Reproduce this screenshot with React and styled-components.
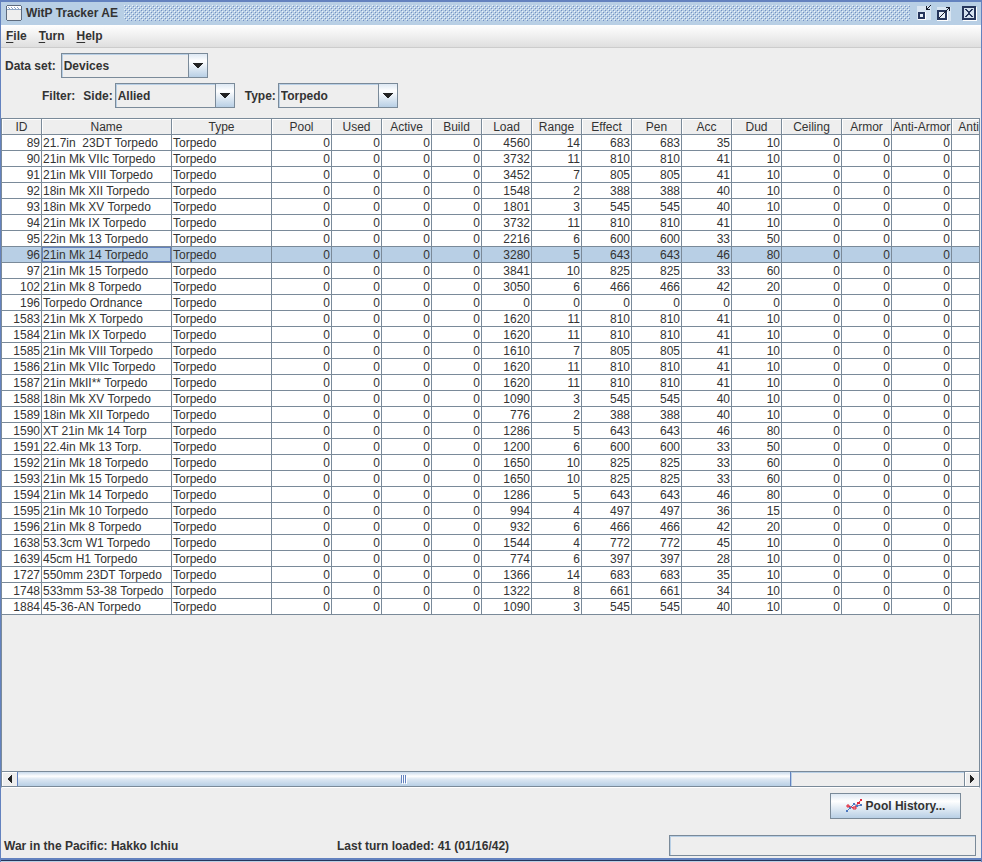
import { useState } from "react";
import styled, { createGlobalStyle } from "styled-components";

const columns = [
    { name: "ID", width: 40 },
    { name: "Name", width: 130 },
    { name: "Type", width: 100 },
    { name: "Pool", width: 60 },
    { name: "Used", width: 50 },
    { name: "Active", width: 50 },
    { name: "Build", width: 50 },
    { name: "Load", width: 50 },
    { name: "Range", width: 50 },
    { name: "Effect", width: 50 },
    { name: "Pen", width: 50 },
    { name: "Acc", width: 50 },
    { name: "Dud", width: 50 },
    { name: "Ceiling", width: 60 },
    { name: "Armor", width: 50 },
    { name: "Anti-Armor", width: 60 },
    { name: "Anti" },
];

// id, name, load, range, effect, pen, acc, dud
const devices = [
    [89, "21.7in  23DT Torpedo", 4560, 14, 683, 683, 35, 10],
    [90, "21in Mk VIIc Torpedo", 3732, 11, 810, 810, 41, 10],
    [91, "21in Mk VIII Torpedo", 3452, 7, 805, 805, 41, 10],
    [92, "18in Mk XII Torpedo", 1548, 2, 388, 388, 40, 10],
    [93, "18in Mk XV Torpedo", 1801, 3, 545, 545, 40, 10],
    [94, "21in Mk IX Torpedo", 3732, 11, 810, 810, 41, 10],
    [95, "22in Mk 13 Torpedo", 2216, 6, 600, 600, 33, 50],
    [96, "21in Mk 14 Torpedo", 3280, 5, 643, 643, 46, 80],
    [97, "21in Mk 15 Torpedo", 3841, 10, 825, 825, 33, 60],
    [102, "21in Mk 8 Torpedo", 3050, 6, 466, 466, 42, 20],
    [196, "Torpedo Ordnance", 0, 0, 0, 0, 0, 0],
    [1583, "21in Mk X Torpedo", 1620, 11, 810, 810, 41, 10],
    [1584, "21in Mk IX Torpedo", 1620, 11, 810, 810, 41, 10],
    [1585, "21in Mk VIII Torpedo", 1610, 7, 805, 805, 41, 10],
    [1586, "21in Mk VIIc Torpedo", 1620, 11, 810, 810, 41, 10],
    [1587, "21in MkII** Torpedo", 1620, 11, 810, 810, 41, 10],
    [1588, "18in Mk XV Torpedo", 1090, 3, 545, 545, 40, 10],
    [1589, "18in Mk XII Torpedo", 776, 2, 388, 388, 40, 10],
    [1590, "XT 21in Mk 14 Torp", 1286, 5, 643, 643, 46, 80],
    [1591, "22.4in Mk 13 Torp.", 1200, 6, 600, 600, 33, 50],
    [1592, "21in Mk 18 Torpedo", 1650, 10, 825, 825, 33, 60],
    [1593, "21in Mk 15 Torpedo", 1650, 10, 825, 825, 33, 60],
    [1594, "21in Mk 14 Torpedo", 1286, 5, 643, 643, 46, 80],
    [1595, "21in Mk 10 Torpedo", 994, 4, 497, 497, 36, 15],
    [1596, "21in Mk 8 Torpedo", 932, 6, 466, 466, 42, 20],
    [1638, "53.3cm W1 Torpedo", 1544, 4, 772, 772, 45, 10],
    [1639, "45cm H1 Torpedo", 774, 6, 397, 397, 28, 10],
    [1727, "550mm 23DT Torpedo", 1366, 14, 683, 683, 35, 10],
    [1748, "533mm 53-38 Torpedo", 1322, 8, 661, 661, 34, 10],
    [1884, "45-36-AN Torpedo", 1090, 3, 545, 545, 40, 10],
];

function Combo({ id, width, options }) {
    return (
        <ComboBox $width={width}>
            <select id={id}>
                {options.map((option) => <option key={option}>{option}</option>)}
            </select>
            <ComboArrow>
                <svg width="10" height="5" viewBox="0 0 10 5" shapeRendering="crispEdges">
                    <path d="M0 0h10v1h-1v1h-1v1h-1v1h-1v1h-2v-1h-1v-1h-1v-1h-1v-1h-1z" fill="#222" />
                </svg>
            </ComboArrow>
        </ComboBox>
    );
}

export default function App() {
    const [selected, setSelected] = useState(96);

    return (
        <Window>
            <GlobalStyle />
            <TitleBar>
                <svg width="16" height="16" viewBox="0 0 16 16" shapeRendering="crispEdges">
                    <path d="M1 0h14v1h1v14h-1v1h-14v-1h-1v-14h1z" fill="#5e6b7d" />
                    <path d="M1 1h14v14h-14z" fill="#fff" />
                    <path d="M1 5h14v10h-14z" fill="#eee" />
                    <path d="M2 2h1v1h-1zM5 2h1v1h-1zM8 2h1v1h-1zM11 2h1v1h-1zM3 3h1v1h-1zM6 3h1v1h-1zM9 3h1v1h-1zM12 3h1v1h-1zM1 4h14v1h-14z" fill="#8ba5c5" />
                </svg>
                <h1>WitP Tracker AE</h1>
                <Bumps>
                    <svg width="100%" height="16" shapeRendering="crispEdges">
                        <defs>
                            <pattern id="bumps" width="4" height="4" patternUnits="userSpaceOnUse">
                                <path d="M0 0h1v1h-1zM2 2h1v1h-1z" fill="#edf4fb" />
                                <path d="M1 1h1v1h-1zM3 3h1v1h-1z" fill="#7491c4" />
                            </pattern>
                        </defs>
                        <rect width="100%" height="16" fill="url(#bumps)" />
                    </svg>
                </Bumps>
                <WindowButtons>
                    <button aria-label="Minimize">
                        <svg width="16" height="16" viewBox="0 0 16 16" shapeRendering="crispEdges">
                            <path d="M2 1h14v14h-14z" fill="#d8e5f2" />
                            <path d="M4 8h5v5h-5z" fill="#e6eff8" stroke="#26365c" strokeWidth="2" />
                            <path d="M3 14h8v1h-8zM10 7h1v8h-1z" fill="#fff" />
                            <path d="M11 1h1v3h3v1h-4zM12 3h1v-1h1v-1h1v-1h1v1h-1v1h-1v1h-1v1h-1z" fill="#151b2b" />
                        </svg>
                    </button>
                    <button aria-label="Maximize">
                        <svg width="16" height="16" viewBox="0 0 16 16" shapeRendering="crispEdges">
                            <path d="M2 2h14v14h-14z" fill="#d8e5f2" />
                            <path d="M3 6h8v8h-8z" fill="#e6eff8" stroke="#26365c" strokeWidth="2" />
                            <path d="M2 15h11v1h-11zM12 7h1v9h-1z" fill="#fff" />
                            <path d="M4 12h1v1h-1zM5 11h1v1h-1zM6 10h1v1h-1zM7 9h1v1h-1zM8 8h1v1h-1zM9 7h1v1h-1zM10 6h1v1h-1zM11 5h1v1h-1zM12 4h1v1h-1zM13 3h1v1h-1zM11 2h4v4h-1v-3h-3z" fill="#151b2b" />
                        </svg>
                    </button>
                    <button aria-label="Close">
                        <svg width="16" height="16" viewBox="0 0 16 16" shapeRendering="crispEdges">
                            <path d="M2 2h14v14h-14z" fill="#fff" />
                            <path d="M2 2h12v12h-12z" fill="#d4e1ef" stroke="#26365c" strokeWidth="2" />
                            <path d="M4 4h2v1h1v1h2v-1h1v-1h2v1h-1v1h-1v1h-1v2h1v1h1v1h1v1h-2v-1h-1v-1h-2v1h-1v1h-2v-1h1v-1h1v-1h1v-2h-1v-1h-1v-1h-1z" fill="#26365c" />
                        </svg>
                    </button>
                </WindowButtons>
            </TitleBar>
            <MenuBar>
                <button><u>F</u>ile</button>
                <button><u>T</u>urn</button>
                <button><u>H</u>elp</button>
            </MenuBar>
            <Filters>
                <FilterRow>
                    <DataSetLabel htmlFor="dataset">Data set:</DataSetLabel>
                    <Combo id="dataset" width={147} options={["Devices"]} />
                </FilterRow>
                <FilterRow $indent>
                    <FilterTitle>Filter:</FilterTitle>
                    <label htmlFor="side">Side:</label>
                    <Combo id="side" width={120} options={["Allied"]} />
                    <TypeLabel htmlFor="type">Type:</TypeLabel>
                    <Combo id="type" width={120} options={["Torpedo"]} />
                </FilterRow>
            </Filters>
            <ScrollPane>
                <Viewport>
                    <Table>
                        <colgroup>
                            {columns.map((col) => <col key={col.name} width={col.width} />)}
                        </colgroup>
                        <thead>
                            <tr>
                                {columns.map((col) => <th key={col.name}>{col.name}</th>)}
                            </tr>
                        </thead>
                        <tbody>
                            {devices.map(([id, name, ...stats]) => (
                                <Row key={id} $selected={id === selected} onClick={() => setSelected(id)}>
                                    <Num>{id}</Num>
                                    <NameCell $focused={id === selected}>{name}</NameCell>
                                    <td>Torpedo</td>
                                    {[0, 0, 0, 0, ...stats, 0, 0, 0].map((value, i) => (
                                        <Num key={i}>{value}</Num>
                                    ))}
                                    <td />
                                </Row>
                            ))}
                        </tbody>
                    </Table>
                </Viewport>
                <ScrollBar>
                    <ScrollButton aria-label="Scroll left">
                        <svg width="4" height="8" viewBox="0 0 4 8" shapeRendering="crispEdges">
                            <path d="M4 0v8h-1v-1h-1v-1h-1v-1h-1v-2h1v-1h1v-1h1v-1z" fill="#222" />
                        </svg>
                    </ScrollButton>
                    <Thumb>
                        <svg width="6" height="9" viewBox="0 0 6 9" shapeRendering="crispEdges">
                            <path d="M1 1h1v8h-1zM3 1h1v8h-1zM5 1h1v8h-1z" fill="#fff" />
                            <path d="M0 0h1v8h-1zM2 0h1v8h-1zM4 0h1v8h-1z" fill="#6382bf" />
                        </svg>
                    </Thumb>
                    <Track />
                    <ScrollButton $right aria-label="Scroll right">
                        <svg width="4" height="8" viewBox="0 0 4 8" shapeRendering="crispEdges">
                            <path d="M0 0v8h1v-1h1v-1h1v-1h1v-2h-1v-1h-1v-1h-1v-1z" fill="#222" />
                        </svg>
                    </ScrollButton>
                </ScrollBar>
            </ScrollPane>
            <Actions>
                <HistoryButton>
                    <svg width="16" height="14" viewBox="0 0 16 14" fill="none">
                        <path d="M1 12L8 5L11 7L15 6" stroke="#4c78c0" />
                        <path d="M2 7L8 9L15 1" stroke="#d8283c" />
                        <path d="M0 11h2v2h-2zM3 8h2v2h-2zM7 4h2v2h-2zM10 6h2v2h-2zM14 5h2v2h-2z" fill="#4c78c0" />
                        <path d="M1 6h2v2h-2zM7 8h3v2h-3z" fill="#f3b0b4" stroke="#e0283c" />
                        <path d="M11 3h3v2h-3zM14 0h2v2h-2z" fill="#e0283c" />
                    </svg>
                    Pool History...
                </HistoryButton>
            </Actions>
            <StatusBar>
                <span>War in the Pacific: Hakko Ichiu</span>
                <span>Last turn loaded: 41 (01/16/42)</span>
                <Progress aria-label="Progress" value="0" max="100" />
            </StatusBar>
            <BottomEdge />
        </Window>
    );
}

const GlobalStyle = createGlobalStyle`
*{
    box-sizing: border-box;
}
body{
    margin: 0;
    background-color: #eeeeee;
}
button, select{
    margin: 0;
    padding: 0;
    border: none;
    border-radius: 0;
    font: inherit;
    color: inherit;
}
`;

const Window = styled.div`
    display: flex;
    flex-direction: column;
    min-height: 100vh;
    border: 1px solid #6382bf;
    border-top: 2px solid #6382bf;
    border-bottom: none;
    background-color: #eeeeee;
    color: #333333;
    font-family: "Liberation Sans", Arial, sans-serif;
    font-size: 12px;
    font-weight: bold;
    line-height: 16px;
`;

const TitleBar = styled.header`
    display: flex;
    align-items: center;
    height: 23px;
    padding: 0 4px 1px 5px;
    background-color: #b8cfe5;
    h1{
        margin: 0 6px 0 4px;
        font-size: 12px;
    }
    svg{
        display: block;
    }
`;

const Bumps = styled.div`
    flex: 1;
    min-width: 0;
`;

const WindowButtons = styled.div`
    display: flex;
    gap: 4px;
    padding-left: 5px;
    button{
        background: none;
    }
    button:last-child{
        margin-left: 6px;
    }
`;

const MenuBar = styled.nav`
    display: flex;
    gap: 12px;
    height: 23px;
    padding: 0 5px;
    border-bottom: 1px solid #cccccc;
    background: linear-gradient(#ffffff, #dfdfdf);
    button{
        background: none;
    }
    u{
        text-underline-offset: 2px;
    }
`;

const Filters = styled.div`
    display: flex;
    flex-direction: column;
    gap: 5px;
    padding: 5px 4px 10px;
`;

const FilterRow = styled.div`
    display: flex;
    align-items: center;
    gap: 2px;
    padding-left: ${props => props.$indent ? "37px" : "0"};
`;

const DataSetLabel = styled.label`
    margin-right: 3px;
`;

const FilterTitle = styled.span`
    margin-right: 6px;
`;

const TypeLabel = styled.label`
    margin-left: 8px;
`;

const ComboBox = styled.div`
    display: grid;
    grid-template-columns: 1fr 20px;
    width: ${props => props.$width}px;
    height: 25px;
    select{
        grid-row: 1;
        grid-column: 1 / 3;
        appearance: none;
        padding: 0 22px 0 2px;
        border: 1px solid #7a8a99;
        background-color: #eeeeee;
        box-shadow: inset 1px 1px #b8cfe5;
    }
`;

const ComboArrow = styled.span`
    grid-row: 1;
    grid-column: 2;
    z-index: 1;
    display: flex;
    align-items: center;
    justify-content: center;
    border: 1px solid #7a8a99;
    background: linear-gradient(#dde8f3, #ffffff 30%, #b8cfe5);
    pointer-events: none;
`;

const ScrollPane = styled.main`
    display: flex;
    flex: 1;
    flex-direction: column;
    border: 1px solid #7a8a99;
    border-bottom: 1px solid #ffffff;
    margin-right: 1px;
`;

const Viewport = styled.div`
    flex: 1;
    overflow: hidden;
`;

const Table = styled.table`
    width: 100%;
    min-width: 977px;
    table-layout: fixed;
    border-collapse: separate;
    border-spacing: 0;
    background-color: #ffffff;
    font-weight: normal;
    line-height: 14px;
    white-space: pre;
    th, td{
        height: 16px;
        padding: 1px 1px 0;
        border-right: 1px solid #7a8a99;
        border-bottom: 1px solid #7a8a99;
    }
    th{
        background-color: #eeeeee;
        box-shadow: inset 1px 1px #ffffff;
        font-weight: normal;
    }
    th:last-child, td:last-child{
        padding-right: 0;
        border-right: none;
        text-align: right;
    }
`;

const Row = styled.tr`
    background-color: ${props => props.$selected ? "#b8cfe5" : "#ffffff"};
`;

const Num = styled.td`
    text-align: right;
`;

const NameCell = styled.td`
    box-shadow: ${props => props.$focused ? "inset 0 0 0 1px #6382bf" : "none"};
`;

const ScrollBar = styled.div`
    display: flex;
    height: 16px;
    border-top: 1px solid #7a8a99;
    border-bottom: 1px solid #7a8a99;
`;

const ScrollButton = styled.button`
    display: flex;
    align-items: center;
    justify-content: center;
    width: 15px;
    background-color: #eeeeee;
    box-shadow: inset 1px 1px #ffffff;
    border-left: ${props => props.$right ? "1px solid #7a8a99" : "none"};
`;

const Thumb = styled.div`
    display: flex;
    flex: 774;
    align-items: center;
    justify-content: center;
    border: 1px solid #6382bf;
    border-width: 0 1px;
    background: linear-gradient(#c8daec, #ffffff 30%, #dde8f3 50%, #b8cfe5);
`;

const Track = styled.div`
    flex: 173;
    box-shadow: inset 1px 1px #b8cfe5;
`;

const Actions = styled.div`
    display: flex;
    justify-content: flex-end;
    padding: 5px 20px 16px;
`;

const HistoryButton = styled.button`
    display: flex;
    align-items: center;
    justify-content: center;
    gap: 4px;
    width: 131px;
    height: 26px;
    border: 1px solid #7a8a99;
    background: linear-gradient(#dde8f3, #ffffff 30%, #b8cfe5);
`;

const StatusBar = styled.footer`
    display: grid;
    grid-template-columns: 333fr 332fr 307fr;
    align-items: center;
    padding: 0 5px 2px 3px;
`;

const Progress = styled.progress`
    appearance: none;
    width: 100%;
    height: 21px;
    border: 1px solid #7a8a99;
    background-color: #eeeeee;
    box-shadow: inset 1px 1px #b8cfe5;
    &::-webkit-progress-bar{
        background: transparent;
    }
`;

const BottomEdge = styled.div`
    height: 4px;
    border-top: 2px solid #6382bf;
    border-bottom: 1px solid #b8cfe5;
    background-color: #26365c;
`;
